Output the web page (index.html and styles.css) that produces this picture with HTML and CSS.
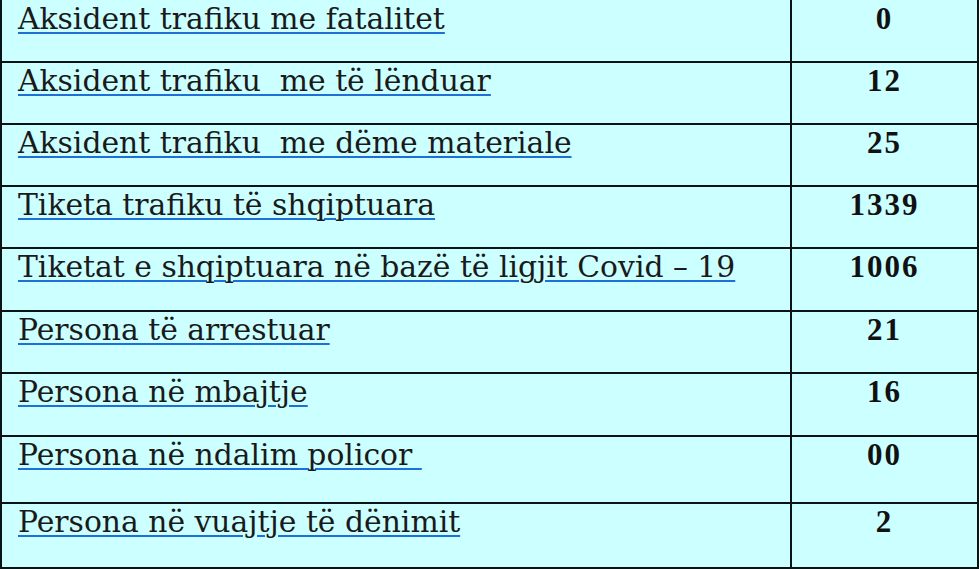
FILE: index.html
```html
<!DOCTYPE html>
<html lang="sq">
<head>
<meta charset="utf-8">
<title>Statistika</title>
<link rel="stylesheet" href="styles.css">
</head>
<body>
<table class="stats">
  <tr class="row first"><td class="label"><a href="#">Aksident trafiku me fatalitet</a></td><td class="num">0</td></tr>
  <tr class="row"><td class="label"><a href="#">Aksident trafiku  me të lënduar</a></td><td class="num">12</td></tr>
  <tr class="row"><td class="label"><a href="#">Aksident trafiku  me dëme materiale</a></td><td class="num">25</td></tr>
  <tr class="row"><td class="label"><a href="#">Tiketa trafiku të shqiptuara</a></td><td class="num">1339</td></tr>
  <tr class="row wide"><td class="label"><a href="#">Tiketat e shqiptuara në bazë të ligjit Covid – 19</a></td><td class="num">1006</td></tr>
  <tr class="row"><td class="label"><a href="#">Persona të arrestuar</a></td><td class="num">21</td></tr>
  <tr class="row wide"><td class="label"><a href="#">Persona në mbajtje</a></td><td class="num">16</td></tr>
  <tr class="row tall"><td class="label"><a href="#">Persona në ndalim policor </a></td><td class="num">00</td></tr>
  <tr class="row last"><td class="label"><a href="#">Persona në vuajtje të dënimit</a></td><td class="num">2</td></tr>
</table>
</body>
</html>
```
FILE: styles.css
```css
html, body {
  margin: 0;
  padding: 0;
  background: #ffffff;
}
body {
  overflow: hidden;
}
.stats {
  border-collapse: collapse;
  width: 979px;
  margin-top: -2px;
  margin-left: 0;
  background: #ccffff;
  table-layout: fixed;
}
.stats td {
  border: 2px solid #0a1414;
  vertical-align: top;
  padding: 0;
  height: 62px;
  box-sizing: border-box;
}
.stats .first td { height: 63px; }
.stats .wide td { height: 63px; }
.stats .tall td { height: 67px; }
.stats .last td { height: 65px; }
.label {
  width: 790px;
  padding-left: 16px !important;
  padding-top: 0 !important;
  font-family: "DejaVu Serif", serif;
  font-size: 29.8px;
  line-height: 36px;
  white-space: pre;
}
.stats .first .label,
.stats .first .num { padding-top: 1px !important; }
.label a {
  color: #1a1a1a;
  text-decoration: underline;
  text-decoration-color: #1f6fd6;
  text-decoration-thickness: 2px;
  text-underline-offset: 3px;
}
.num {
  text-align: center;
  padding-top: 0 !important;
  font-family: "Liberation Serif", serif;
  font-weight: bold;
  font-size: 31px;
  letter-spacing: 2px;
  line-height: 36px;
  color: #111;
}
```
